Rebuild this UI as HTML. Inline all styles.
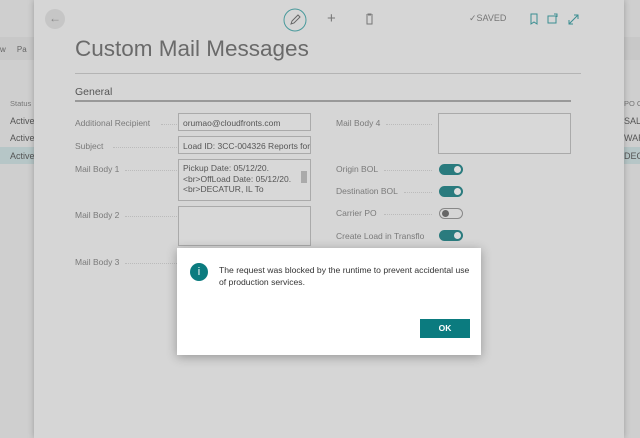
<!DOCTYPE html>
<html><head><style>
*{margin:0;padding:0;box-sizing:border-box}
body{width:640px;height:438px;overflow:hidden;background:#cfcfcf;font-family:"Liberation Sans",sans-serif;position:relative;color:#555}
.abs{position:absolute;white-space:nowrap}
.panel{left:34px;top:0;width:590px;height:438px;background:#d6d6d6;box-shadow:0 0 6px rgba(0,0,0,.25)}
.lbl{position:absolute;font-size:8.5px;color:#7a7a7a;white-space:nowrap}
.lbl span{position:absolute;top:6px;border-top:1px dotted #bbb}
.box{position:absolute;border:1px solid #aaa;background:#d8d8d8;font-size:8.5px;color:#555;padding:4px 4px;white-space:nowrap;overflow:hidden}
.tog{position:absolute;width:24px;height:11px;border-radius:6px;background:#2a7b7e}
.tog::after{content:"";position:absolute;right:2px;top:2px;width:7px;height:7px;border-radius:50%;background:#ddd}
.off{background:transparent;border:1px solid #888}
.off::after{left:2px;right:auto;top:1px;background:#666}
</style></head><body>
<div class="abs" style="left:0;top:37px;width:34px;height:23px;background:#c8c8c8"></div>
<div class="abs" style="left:0;top:45px;font-size:8px;color:#666">w&nbsp;&nbsp;&nbsp;&nbsp;&nbsp;Pa</div>
<div class="abs" style="left:10px;top:99px;font-size:7.5px;color:#777">Status</div>
<div class="abs" style="left:10px;top:116px;font-size:9px;color:#555">Active</div>
<div class="abs" style="left:10px;top:133px;font-size:9px;color:#555">Active</div>
<div class="abs" style="left:0;top:147px;width:34px;height:17px;background:#b6c6c7"></div>
<div class="abs" style="left:10px;top:151px;font-size:9px;color:#555">Active</div>
<div class="abs" style="left:623px;top:37px;width:17px;height:23px;background:#c8c8c8"></div>
<div class="abs" style="left:624px;top:99px;font-size:7.5px;color:#777">PO C</div>
<div class="abs" style="left:624px;top:116px;font-size:9px;color:#555">SALE</div>
<div class="abs" style="left:624px;top:133px;font-size:9px;color:#555">WAR</div>
<div class="abs" style="left:623px;top:147px;width:17px;height:17px;background:#b6c6c7"></div>
<div class="abs" style="left:624px;top:151px;font-size:9px;color:#555">DEC</div>

<div class="abs panel"></div>
<div class="abs" style="left:45px;top:9px;width:20px;height:20px;border-radius:50%;background:#c6c6c6;text-align:center;line-height:19px;font-size:12px;color:#888">←</div>
<svg class="abs" style="left:283px;top:8px" width="24" height="24"><circle cx="12" cy="12" r="11" fill="none" stroke="#4a9a9c" stroke-width="1"/><path d="M8 16l1-3 6-6 2 2-6 6z" fill="none" stroke="#666" stroke-width="1"/></svg>
<div class="abs" style="left:327px;top:10px;font-size:15px;color:#777">+</div>
<svg class="abs" style="left:365px;top:13px" width="9" height="12"><path d="M1 2h7M3 2V1h3v1M2 3v8h5V3" fill="none" stroke="#777"/></svg>
<div class="abs" style="left:469px;top:13px;font-size:9px;color:#777">✓SAVED</div>
<svg class="abs" style="left:529px;top:13px" width="50" height="12"><path d="M2 1h6v10l-3-2-3 2z" fill="none" stroke="#3b8e91"/><path d="M19 3h8v7h-8zM25 1h3v3" fill="none" stroke="#3b8e91"/><path d="M40 11l9-9M40 7v4h4M45 2h4v4" fill="none" stroke="#3b8e91"/></svg>
<div class="abs" style="left:75px;top:36px;font-size:22.5px;color:#6a6a6a;font-weight:300">Custom Mail Messages</div>
<div class="abs" style="left:75px;top:73px;width:506px;height:1px;background:#b4b4b4"></div>
<div class="abs" style="left:75px;top:86px;font-size:10.5px;color:#555">General</div>
<div class="abs" style="left:75px;top:100px;width:496px;height:2px;background:#999"></div>

<div class="lbl" style="left:75px;top:118px">Additional Recipient<span style="left:86px;width:18px"></span></div>
<div class="lbl" style="left:75px;top:141px">Subject<span style="left:38px;width:64px"></span></div>
<div class="lbl" style="left:75px;top:164px">Mail Body 1<span style="left:50px;width:52px"></span></div>
<div class="lbl" style="left:75px;top:210px">Mail Body 2<span style="left:50px;width:52px"></span></div>
<div class="lbl" style="left:75px;top:257px">Mail Body 3<span style="left:50px;width:52px"></span></div>
<div class="box" style="left:178px;top:113px;width:133px;height:18px">orumao@cloudfronts.com</div>
<div class="box" style="left:178px;top:136px;width:133px;height:18px">Load ID: 3CC-004326 Reports for (</div>
<div class="box" style="left:178px;top:159px;width:133px;height:42px;line-height:10.5px;padding-top:3px">Pickup Date: 05/12/20.<br>&lt;br&gt;OffLoad Date: 05/12/20.<br>&lt;br&gt;DECATUR, IL To</div>
<div class="abs" style="left:301px;top:171px;width:6px;height:12px;background:#aaa"></div>
<div class="box" style="left:178px;top:206px;width:133px;height:40px"></div>

<div class="lbl" style="left:336px;top:118px">Mail Body 4<span style="left:50px;width:46px"></span></div>
<div class="box" style="left:438px;top:113px;width:133px;height:41px"></div>
<div class="lbl" style="left:336px;top:164px">Origin BOL<span style="left:48px;width:48px"></span></div>
<div class="lbl" style="left:336px;top:186px">Destination BOL<span style="left:68px;width:28px"></span></div>
<div class="lbl" style="left:336px;top:208px">Carrier PO<span style="left:48px;width:48px"></span></div>
<div class="lbl" style="left:336px;top:231px">Create Load in Transflo</div>
<div class="tog" style="left:439px;top:164px"></div>
<div class="tog" style="left:439px;top:186px"></div>
<div class="tog off" style="left:439px;top:208px"></div>
<div class="tog" style="left:439px;top:230px"></div>

<div class="abs" style="left:177px;top:248px;width:304px;height:107px;background:#fff;box-shadow:0 2px 10px rgba(0,0,0,.3)">
<div class="abs" style="left:13px;top:15px;width:18px;height:18px;border-radius:50%;background:#0b7b7f;color:#fff;text-align:center;font-size:11px;line-height:18px">i</div>
<div class="abs" style="left:42px;top:16px;width:255px;font-size:8.6px;line-height:12px;color:#333;white-space:normal">The request was blocked by the runtime to prevent accidental use of production services.</div>
<div class="abs" style="left:243px;top:71px;width:50px;height:19px;background:#0b7b7f;color:#fff;font-size:8.5px;font-weight:bold;text-align:center;line-height:19px">OK</div>
</div>
</body></html>
